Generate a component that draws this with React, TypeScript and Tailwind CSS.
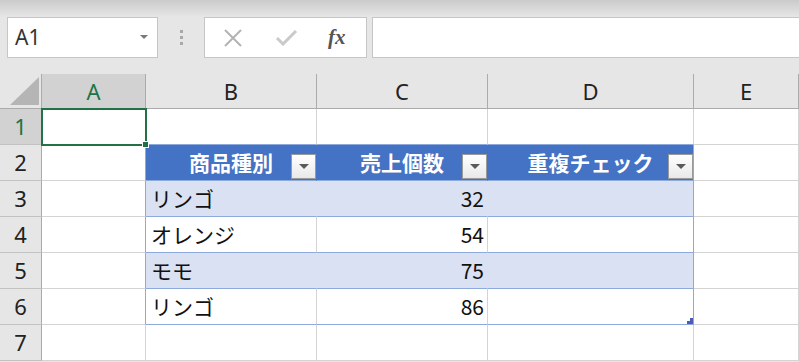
import React from "react"

type Row = { name: string; qty: string }

const cols = ["A", "B", "C", "D", "E"]

const rows: Row[] = [
  { name: "リンゴ", qty: "32" },
  { name: "オレンジ", qty: "54" },
  { name: "モモ", qty: "75" },
  { name: "リンゴ", qty: "86" },
]

const headers = ["商品種別", "売上個数", "重複チェック"]

function FilterButton() {
  return (
    <div className="absolute right-0 top-[9px] w-[25px] h-[25px] border border-[#9a9a9a] bg-linear-to-b from-white to-[#e9e9e9] flex items-center justify-center">
      <svg width="10" height="6" viewBox="0 0 10 6">
        <polygon points="0,0 10,0 5,5" fill="#5a5a5a" />
      </svg>
    </div>
  )
}

// border / fill for a grid cell at row r (1-based), col c (0 = A)
function cellClass(r: number, c: number) {
  const inTable = r >= 2 && r <= 6 && c >= 1 && c <= 3
  if (inTable) {
    if (r === 2) {
      return c === 3
        ? "bg-[#4472c4] border-r border-b border-r-[#8ea9db] border-b-[#8ea9db]"
        : "bg-[#4472c4] border-r border-b border-r-[#4472c4] border-b-[#8ea9db]"
    }
    if (r === 3 || r === 5) {
      return c === 3
        ? "bg-[#d9e1f2] border-r border-b border-r-[#8ea9db] border-b-[#8ea9db]"
        : "bg-[#d9e1f2] border-r border-b border-r-[#d9e1f2] border-b-[#8ea9db]"
    }
    return c === 3
      ? "bg-white border-r border-b border-r-[#8ea9db] border-b-[#8ea9db]"
      : "bg-white border-r border-b border-r-[#d4d4d4] border-b-[#8ea9db]"
  }
  if (r === 1 && c >= 1 && c <= 3) {
    return "bg-white border-r border-b border-r-[#d4d4d4] border-b-[#8ea9db]"
  }
  if (c === 0 && r >= 2 && r <= 6) {
    return "bg-white border-r border-b border-r-[#8ea9db] border-b-[#d4d4d4]"
  }
  return "bg-white border-r border-b border-[#d4d4d4]"
}

function cellContent(r: number, c: number) {
  if (r === 2 && c >= 1 && c <= 3) {
    return (
      <>
        <span className="w-full text-center font-bold text-white text-[21px]">{headers[c - 1]}</span>
        <FilterButton />
      </>
    )
  }
  if (r >= 3 && r <= 6) {
    const item = rows[r - 3]
    if (c === 1) return <span className="pl-[5px] text-[21px] text-[#111]">{item.name}</span>
    if (c === 2) return <span className="w-full text-right pr-[3px] text-[21px] text-[#111]">{item.qty}</span>
    if (c === 3 && r === 6) {
      return (
        <>
          <div className="absolute right-0 bottom-0 w-[6px] h-[3px] bg-[#4a5bb8]" />
          <div className="absolute right-0 bottom-0 w-[3px] h-[6px] bg-[#4a5bb8]" />
        </>
      )
    }
  }
  if (r === 1 && c === 0) {
    return (
      <div className="absolute -left-[1px] -top-[1px] w-[106px] h-[38px] border-2 border-[#217346] z-10">
        <div className="absolute -right-[4px] -bottom-[4px] w-[7px] h-[7px] bg-[#217346] border border-white" />
      </div>
    )
  }
  return null
}

export default function App() {
  return (
    <div className="w-[799px] h-[362px] overflow-hidden bg-[#e6e6e6] font-['Noto_Sans_CJK_JP',sans-serif]">
      {/* title strip */}
      <div className="h-[17px] bg-linear-to-b from-[#cbcbcb] to-[#e6e6e6]" />

      {/* formula bar */}
      <div className="h-[41px] flex items-stretch">
        <div className="ml-[7px] w-[151px] bg-white border border-[#c6c6c6] flex items-center justify-between pl-[7px] pr-[9px]">
          <span className="text-[21px] text-[#333] font-['Noto_Sans',sans-serif]">A1</span>
          <svg width="8" height="5" viewBox="0 0 8 5">
            <polygon points="0,0 8,0 4,4" fill="#7a7a7a" />
          </svg>
        </div>
        <div className="w-[46px] flex flex-col items-center justify-center gap-[3px]">
          <div className="w-[3px] h-[3px] bg-[#a8a8a8]" />
          <div className="w-[3px] h-[3px] bg-[#a8a8a8]" />
          <div className="w-[3px] h-[3px] bg-[#a8a8a8]" />
        </div>
        <div className="w-[163px] bg-white border border-[#c6c6c6] flex items-center">
          <svg width="20" height="18" viewBox="0 0 20 18" className="ml-[18px]">
            <path d="M2 1 L18 17 M18 1 L2 17" stroke="#b3b3b3" strokeWidth="2" />
          </svg>
          <svg width="22" height="16" viewBox="0 0 22 16" className="ml-[33px]">
            <path d="M1 8 L7 14 L20 1" stroke="#cacaca" strokeWidth="3" fill="none" />
          </svg>
          <span className="ml-[30px] text-[21px] italic font-semibold text-[#555] font-['Liberation_Serif',serif] leading-none">
            fx
          </span>
        </div>
        <div className="ml-[5px] flex-1 bg-white border border-r-0 border-[#c6c6c6]" />
      </div>

      <div className="h-[16px]" />

      {/* sheet grid */}
      <div className="grid grid-cols-[42px_104px_171px_171px_206px_105px] grid-rows-[35px_repeat(7,36px)] text-[#222]">
        <div className="bg-[#e6e6e6] border-r border-b border-[#ababab] flex items-end justify-end pr-[2px] pb-[3px]">
          <svg width="29" height="28" viewBox="0 0 29 28">
            <polygon points="29,0 29,28 0,28" fill="#b5b5b5" />
          </svg>
        </div>
        {cols.map((c) => (
          <div
            key={c}
            className={
              c === "A"
                ? "bg-[#d2d2d2] border-r border-b border-[#ababab] flex items-center justify-center text-[22px] text-[#217346] font-['Noto_Sans',sans-serif]"
                : "bg-[#e6e6e6] border-r border-b border-[#ababab] flex items-center justify-center text-[22px] text-[#222] font-['Noto_Sans',sans-serif]"
            }
          >
            {c}
          </div>
        ))}

        {[1, 2, 3, 4, 5, 6, 7].map((r) => (
          <React.Fragment key={r}>
            <div
              className={
                r === 1
                  ? "bg-[#d2d2d2] border-r border-r-[#ababab] border-b border-b-[#c2c2c2] flex items-center justify-center text-[22px] text-[#217346] font-['Noto_Sans',sans-serif]"
                  : "bg-[#e6e6e6] border-r border-r-[#ababab] border-b border-b-[#c2c2c2] flex items-center justify-center text-[22px] text-[#222] font-['Noto_Sans',sans-serif]"
              }
            >
              {r}
            </div>
            {cols.map((_, c) => (
              <div key={c} className={`relative flex items-center ${cellClass(r, c)}`}>
                {cellContent(r, c)}
              </div>
            ))}
          </React.Fragment>
        ))}
      </div>
    </div>
  )
}
